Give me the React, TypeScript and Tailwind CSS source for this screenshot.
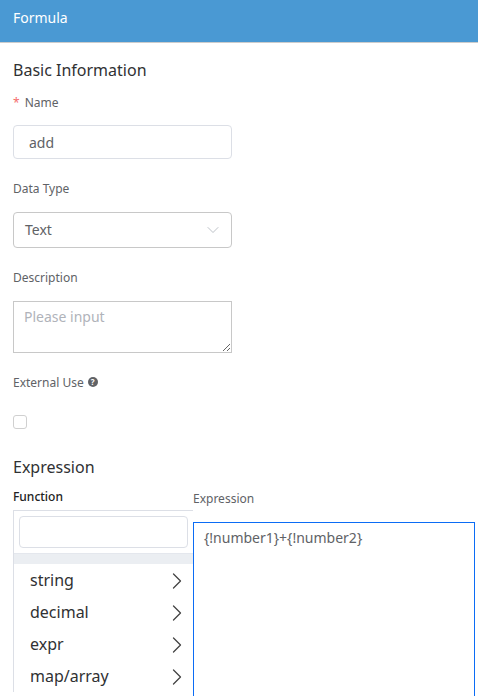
import { ChevronRight, ChevronDown } from 'lucide-react'

const functions = ['string', 'decimal', 'expr', 'map/array']

export default function App() {
  return (
    <div className="h-[696px] w-[478px] overflow-hidden bg-white font-['Noto_Sans','Liberation_Sans',sans-serif] text-[#333]">
      <header className="flex h-[43px] items-center border-b border-[#ccc] bg-[#4a99d3] pb-[6px] pl-[13px] text-sm text-white">
        Formula
      </header>

      <div className="pl-[13px]">
        <h2 className="mt-[15px] h-6 text-base leading-6 text-[#303133]">Basic Information</h2>

        <label className="mt-[12px] flex h-[18px] items-center text-xs text-[#606266]">
          <span className="mr-[5px] text-[#f56c6c]">*</span>Name
        </label>
        <div className="mt-[13px] flex h-[34px] w-[219px] items-center rounded border border-[#dcdfe6] pl-[15px] pt-[1px] text-sm text-[#606266]">
          add
        </div>

        <label className="mt-[21px] flex h-[18px] items-center text-xs text-[#606266]">Data Type</label>
        <div className="mt-[14px] flex h-9 w-[219px] items-center justify-between rounded border border-[#c8c8c8] pl-[11px] pr-[8px] text-sm text-[#606266]">
          Text
          <ChevronDown className="h-5 w-5 text-[#b0b4bc]" strokeWidth={1} />
        </div>

        <label className="mt-[21px] flex h-[18px] items-center text-xs text-[#606266]">Description</label>
        <textarea
          placeholder="Please input"
          className="mt-[14px] block h-[52px] w-[219px] border border-[#c8c8c8] px-[10px] py-[5px] text-sm outline-none placeholder:text-[#b0b3ba]"
        />

        <label className="mt-[21px] flex h-[18px] items-center gap-1 text-xs text-[#606266]">
          External Use
          <span className="mb-[2px] flex h-[10px] w-[10px] items-center justify-center rounded-full bg-[#606266] text-[8px] font-bold leading-none text-white">
            ?
          </span>
        </label>
        <div className="mt-[23px] h-[14px] w-[14px] rounded-[3px] border border-[#d0d0d0]" />

        <h2 className="mt-[26px] h-6 text-base leading-6 text-[#303133]">Expression</h2>
      </div>

      <div className="mt-[9px] flex pl-[13px]">
        <div className="w-[180px] shrink-0">
          <div className="flex h-[18px] items-center text-xs font-medium text-[#222]">Function</div>
          <div className="mt-[4px] border-l border-t border-[#dcdfe6]">
            <div className="p-[5px]">
              <div className="h-[32px] w-[169px] rounded border border-[#dcdfe6]" />
            </div>
            <div className="h-[11px] border-t border-[#e4e7ed] bg-[#ebeef2]" />
            <ul>
              {functions.map((name) => (
                <li key={name} className="flex h-8 items-center justify-between pl-4 pr-[2px] text-base text-[#303133]">
                  {name}
                  <ChevronRight className="mt-[2px] h-7 w-7 text-[#444]" strokeWidth={1.1} />
                </li>
              ))}
            </ul>
          </div>
        </div>

        <div className="w-[282px] shrink-0">
          <div className="mt-[2px] flex h-[18px] items-center text-xs text-[#606266]">Expression</div>
          <div className="mt-[14px] h-[300px] border border-[#0b6cf5] px-[10px] py-[5px] text-sm text-[#606266]">
            {'{!number1}+{!number2}'}
          </div>
        </div>
      </div>
    </div>
  )
}
